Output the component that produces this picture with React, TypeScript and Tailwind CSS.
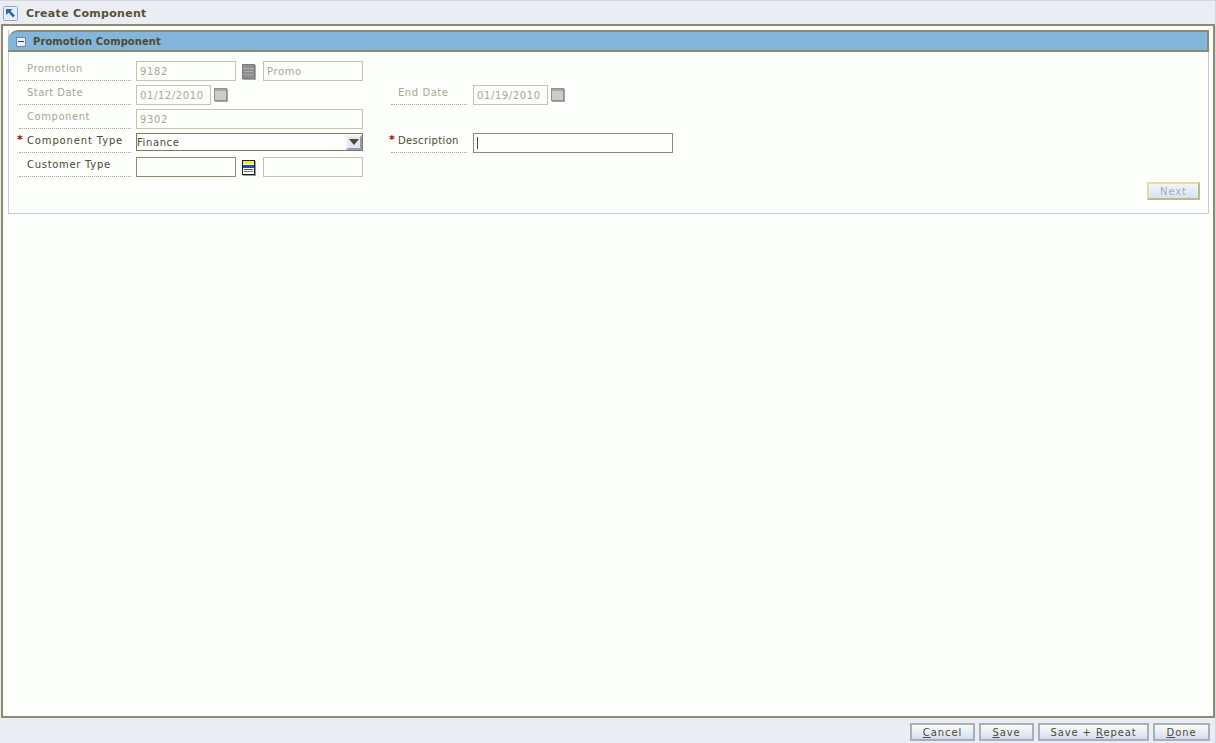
import React from "react";

const font = { fontFamily: '"DejaVu Sans", Verdana, sans-serif' };

function Label({ text, req, disabled, w = "w-[112px] pl-[8px]", track = "tracking-[0.55px]" }: { text: string; req?: boolean; disabled?: boolean; w?: string; track?: string }) {
  return (
    <div className={`relative h-5 ${w} ${track} shrink-0 border-b border-dotted border-[#a9a88f] text-[10px] leading-[15px] ${disabled ? "text-[#a8a794]" : "text-[#4c4b33]"}`}>
      {req && <span className="absolute left-[-2px] top-[1px] text-[11px] font-bold leading-[12px] text-[#a00000]">*</span>}
      {text}
    </div>
  );
}

function Field({ text, w, disabled, children }: { text?: string; w: string; disabled?: boolean; children?: React.ReactNode }) {
  return (
    <div className={`flex h-5 ${w} shrink-0 items-center border pl-[3px] text-[10px] tracking-[0.6px] ${disabled ? "border-[#c3c4ae] text-[#a8a794]" : "border-[#8f8a6e] text-[#4c4b33]"}`}>
      {text}
      {children}
    </div>
  );
}

function CalIcon() {
  return (
    <svg width="14" height="14" viewBox="0 0 14 14" className="mt-[3px] ml-[3px] shrink-0">
      <rect x="1" y="1" width="13" height="13" fill="#a4a4b4" />
      <rect x="0.5" y="0.5" width="12" height="12" fill="#cbcdc6" stroke="#8f8f8f" />
      <rect x="1" y="1" width="11" height="2" fill="#a8a8a8" />
    </svg>
  );
}

function LovIcon({ active }: { active?: boolean }) {
  return active ? (
    <svg width="14" height="16" viewBox="0 0 14 16" className="mt-[3px] mr-[7px] ml-[6px] shrink-0">
      <rect x="1" y="1" width="13" height="15" fill="#9a9aa8" />
      <rect x="0.5" y="0.5" width="12" height="14" fill="#fff" stroke="#222" />
      <rect x="1" y="1" width="11" height="3" fill="#f5ea2a" />
      <rect x="1" y="4" width="11" height="1" fill="#f8f8e8" />
      <rect x="1" y="5" width="11" height="3" fill="#1f4fa8" />
      <rect x="2" y="9" width="9" height="1" fill="#555" />
      <rect x="2" y="11" width="9" height="1" fill="#777" />
    </svg>
  ) : (
    <svg width="14" height="16" viewBox="0 0 14 16" className="mt-[3px] mr-[7px] ml-[6px] shrink-0">
      <rect x="1" y="1" width="13" height="15" fill="#a8a8a8" />
      <rect x="0.5" y="0.5" width="12" height="14" fill="#8e8e8e" stroke="#7c7c7c" />
      <rect x="1" y="4" width="11" height="1" fill="#b0b0b0" />
      <rect x="2" y="7" width="9" height="1" fill="#a8a8a8" />
      <rect x="2" y="10" width="9" height="1" fill="#a8a8a8" />
    </svg>
  );
}

function Btn({ w, children }: { w: string; children: React.ReactNode }) {
  return (
    <div className={`flex h-[18px] ${w} items-center justify-center border-2 border-[#a9aebe] bg-gradient-to-b from-[#fbfbf0] via-[#e9eef7] to-[#cfdcee] text-[10px] tracking-[0.9px] text-[#4c4b33]`}>
      {children}
    </div>
  );
}

export default function App() {
  return (
    <div style={font} className="flex h-[743px] w-[1216px] flex-col overflow-hidden border-t border-r border-[#d6d6e2] bg-[#ecedf3]">
      <div className="flex h-[23px] items-center pl-[3px]">
        <svg width="15" height="15" viewBox="0 0 15 15" className="mt-[2px] shrink-0">
          <rect x="0.5" y="0.5" width="14" height="14" rx="1" fill="#e6eefa" stroke="#8aa8d8" />
          <path d="M3 3h6.5L7.6 4.9 12 9.6 10 11.5 5.6 6.8 3 9z" fill="#2f6aa8" />
        </svg>
        <span className="mt-[3px] ml-2 text-[11px] font-bold tracking-[0.3px] text-[#55533a]">Create Component</span>
      </div>

      <div className="ml-px h-[694px] border-2 border-[#8f8a6e] bg-[#fcfefb] pt-[4px] pr-[4px] pl-[5px]">
        <div className="h-[184px] border-r border-b border-l border-[#c9c9da]">
          <div className="-mx-px flex h-[22px] items-center rounded-tl-[10px] border-t-2 border-r-2 border-b-2 border-l-0 border-[#8f8a6e] bg-[#84b5da] pl-[8px]">
            <svg width="10" height="10" viewBox="0 0 10 10" className="mt-px shrink-0">
              <rect x="0.5" y="0.5" width="9" height="9" fill="#e9eff8" stroke="#6c86b0" />
              <rect x="2" y="4" width="6" height="1" fill="#39476a" />
            </svg>
            <span className="mt-px ml-[7px] text-[10px] font-bold tracking-[0.07px] text-[#4c4b33]">Promotion Component</span>
          </div>

          <div className="flex flex-col gap-1 pt-[9px] pl-[10px]">
            <div className="flex">
              <Label text="Promotion" disabled />
              <div className="ml-[5px] flex">
                <Field text="9182" w="w-[100px]" disabled />
                <LovIcon />
                <Field text="Promo" w="w-[100px]" disabled />
              </div>
            </div>
            <div className="flex">
              <Label text="Start Date" disabled track="tracking-[0.45px]" />
              <div className="ml-[5px] flex w-[255px]">
                <Field text="01/12/2010" w="w-[75px]" disabled />
                <CalIcon />
              </div>
              <Label text="End Date" disabled w="w-[76px] pl-[7px]" />
              <div className="ml-[6px] flex">
                <Field text="01/19/2010" w="w-[75px]" disabled />
                <CalIcon />
              </div>
            </div>
            <div className="flex">
              <Label text="Component" disabled />
              <div className="ml-[5px] flex">
                <Field text="9302" w="w-[227px]" disabled />
              </div>
            </div>
            <div className="flex">
              <Label text="Component Type" req track="tracking-[0.85px]" />
              <div className="ml-[5px] flex w-[255px]">
                <div className="flex h-[18px] w-[227px] items-center justify-between border-[1.5px] border-[#7d7a60] text-[10px] tracking-[0.6px] text-[#4c4b33]">
                  <span>Finance</span>
                  <div className="flex h-[15px] w-4 items-center justify-center border-2 border-t-[#eef1f7] border-r-[#9a9db0] border-b-[#9a9db0] border-l-[#eef1f7] bg-[#e2e8f2]">
                    <svg width="10" height="6" viewBox="0 0 10 6" className="shrink-0">
                      <path d="M0 0h10L5 6z" fill="#4c4b33" />
                    </svg>
                  </div>
                </div>
              </div>
              <Label text="Description" req w="w-[76px] pl-[7px]" track="tracking-[0.35px]" />
              <div className="ml-[6px]">
                <Field w="w-[200px]">
                  <span className="block h-3 w-px bg-[#4c4b33]" />
                </Field>
              </div>
            </div>
            <div className="flex">
              <Label text="Customer Type" track="tracking-[0.7px]" />
              <div className="ml-[5px] flex">
                <Field w="w-[100px]" />
                <LovIcon active />
                <Field w="w-[100px]" disabled />
              </div>
            </div>
          </div>

          <div className="flex justify-end pt-[5px] pr-[8px]">
            <div className="flex h-[18px] w-[53px] items-center justify-center border-2 border-t-[#e6dca0] border-r-[#bdb98e] border-b-[#bdb98e] border-l-[#e6dca0] bg-gradient-to-b from-[#f2f5f7] to-[#d6e2f2] text-[10px] tracking-[0.9px] text-[#a9abaf]">
              Next
            </div>
          </div>
        </div>
      </div>

      <div className="flex justify-end gap-1 pt-[5px] pr-[5px]">
        <Btn w="w-[65px]"><span><u>C</u>ancel</span></Btn>
        <Btn w="w-[55px]"><span><u>S</u>ave</span></Btn>
        <Btn w="w-[111px]"><span>Save + <u>R</u>epeat</span></Btn>
        <Btn w="w-[57px]"><span><u>D</u>one</span></Btn>
      </div>
    </div>
  );
}
